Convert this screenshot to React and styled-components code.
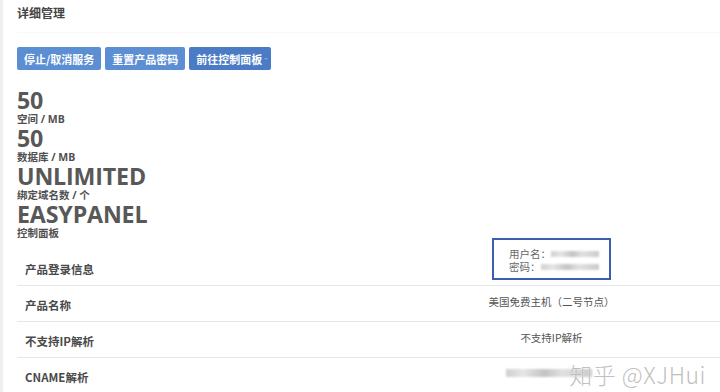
import React from "react";
import styled, { createGlobalStyle } from "styled-components";

const GlobalStyle = createGlobalStyle`
  * {
    margin: 0;
    padding: 0;
    box-sizing: border-box;
  }
  body {
    background: #fff;
    font-family: "Open Sans", "Noto Sans CJK SC", sans-serif;
    color: #555;
    overflow: hidden;
  }
`;

const Page = styled.div`
  position: relative;
  width: 720px;
  height: 392px;
  border-left: 3px solid #efefef;
  padding-left: 14px;
  overflow: hidden;
`;

const TitleBar = styled.div`
  padding-top: 6px;
  padding-bottom: 10px;
  border-bottom: 1px solid #f8f8f8;
`;

const Title = styled.h3`
  font-size: 12px;
  line-height: 16px;
  font-weight: 700;
  color: #444;
`;

const Toolbar = styled.div`
  display: flex;
  gap: 4px;
  margin-top: 14px;
`;

const Button = styled.button`
  display: flex;
  align-items: center;
  gap: 2px;
  height: 23px;
  padding: ${(p) => (p.$caret ? "0 3px 0 7px" : "0 7px")};
  border: none;
  border-radius: 2px;
  background: ${(p) => (p.$dark ? "#4a7bc4" : "#5b8ed3")};
  color: #fff;
  font-family: "Noto Sans CJK SC", sans-serif;
  font-size: 11px;
  font-weight: 700;
`;

const Caret = styled.span`
  width: 0;
  height: 0;
  border-left: 2px solid transparent;
  border-right: 2px solid transparent;
  border-top: 2px solid rgba(255, 255, 255, 0.3);
`;

const Stats = styled.div`
  margin-top: 18px;
`;

const Stat = styled.div`
  display: flex;
  flex-direction: column;
`;

const Big = styled.span`
  font-size: 23.2px;
  line-height: 25px;
  font-weight: 700;
  color: #585858;
  letter-spacing: -0.15px;
`;

const Small = styled.span`
  font-size: 10.5px;
  line-height: 13px;
  font-weight: 700;
  color: #505050;
`;

const Table = styled.div`
  margin-top: -2px;
`;

const Row = styled.div`
  display: grid;
  grid-template-columns: 366px 1fr;
  height: ${(p) => p.$h || 36}px;
  border-top: ${(p) => (p.$first ? "none" : "1px solid #e6e6e6")};
`;

const Label = styled.div`
  display: flex;
  align-items: ${(p) => (p.$end ? "flex-end" : "center")};
  padding: ${(p) => (p.$end ? "0 0 8px 8px" : "2px 0 0 8px")};
  font-family: "Noto Sans CJK SC", sans-serif;
  font-size: 11.5px;
  line-height: 16px;
  font-weight: 700;
  color: #4a4a4a;
`;

const Value = styled.div`
  display: flex;
  align-items: ${(p) => (p.$top ? "flex-start" : "center")};
  justify-content: center;
  padding-bottom: ${(p) => (p.$top ? "0" : "5px")};
  font-family: "Noto Sans CJK SC", sans-serif;
  font-size: 10.5px;
  color: #555;
`;

const LoginBox = styled.div`
  width: 119px;
  height: 42px;
  border: 2px solid #3d5db1;
  padding: 7px 0 0 15px;
  display: flex;
  flex-direction: column;
  font-size: 10.5px;
  line-height: 13px;
  color: #666;
`;

const Line = styled.div`
  display: flex;
  align-items: center;
`;

const Blur = styled.span`
  display: inline-block;
  width: ${(p) => p.$w}px;
  height: ${(p) => p.$h || 6}px;
  margin-left: ${(p) => p.$ml || 0}px;
  background: linear-gradient(
    90deg,
    #c8c8c8 0%,
    #e2e2e2 20%,
    #b9b9b9 45%,
    #dcdcdc 65%,
    #c2c2c2 100%
  );
  filter: blur(1.2px);
  opacity: 0.85;
`;

const Watermark = styled.div`
  position: absolute;
  right: 14px;
  bottom: 1px;
  font-family: "Noto Sans CJK SC", sans-serif;
  font-size: 23px;
  font-weight: 300;
  color: rgba(175, 175, 175, 0.8);
  text-shadow: 0 0 1px rgba(255, 255, 255, 0.9);
  letter-spacing: 0.5px;
  white-space: nowrap;
`;

const stats = [
  { big: "50", small: "空间 / MB" },
  { big: "50", small: "数据库 / MB" },
  { big: "UNLIMITED", small: "绑定域名数 / 个" },
  { big: "EASYPANEL", small: "控制面板" },
];

export default function App() {
  return (
    <Page>
      <GlobalStyle />
      <TitleBar>
        <Title>详细管理</Title>
      </TitleBar>
      <Toolbar>
        <Button>停止/取消服务</Button>
        <Button>重置产品密码</Button>
        <Button $dark $caret>
          前往控制面板
          <Caret />
        </Button>
      </Toolbar>
      <Stats>
        {stats.map((s) => (
          <Stat key={s.small}>
            <Big>{s.big}</Big>
            <Small>{s.small}</Small>
          </Stat>
        ))}
      </Stats>
      <Table>
        <Row $first $h={47}>
          <Label $end>产品登录信息</Label>
          <Value $top>
            <LoginBox>
              <Line>
                用户名：
                <Blur $w={48} />
              </Line>
              <Line>
                密码：
                <Blur $w={58} />
              </Line>
            </LoginBox>
          </Value>
        </Row>
        <Row>
          <Label>产品名称</Label>
          <Value>美国免费主机（二号节点）</Value>
        </Row>
        <Row>
          <Label>不支持IP解析</Label>
          <Value>不支持IP解析</Value>
        </Row>
        <Row>
          <Label>CNAME解析</Label>
          <Value>
            <Blur $w={86} $h={8} $ml={-6} />
          </Value>
        </Row>
      </Table>
      <Watermark>知乎 @XJHui</Watermark>
    </Page>
  );
}
